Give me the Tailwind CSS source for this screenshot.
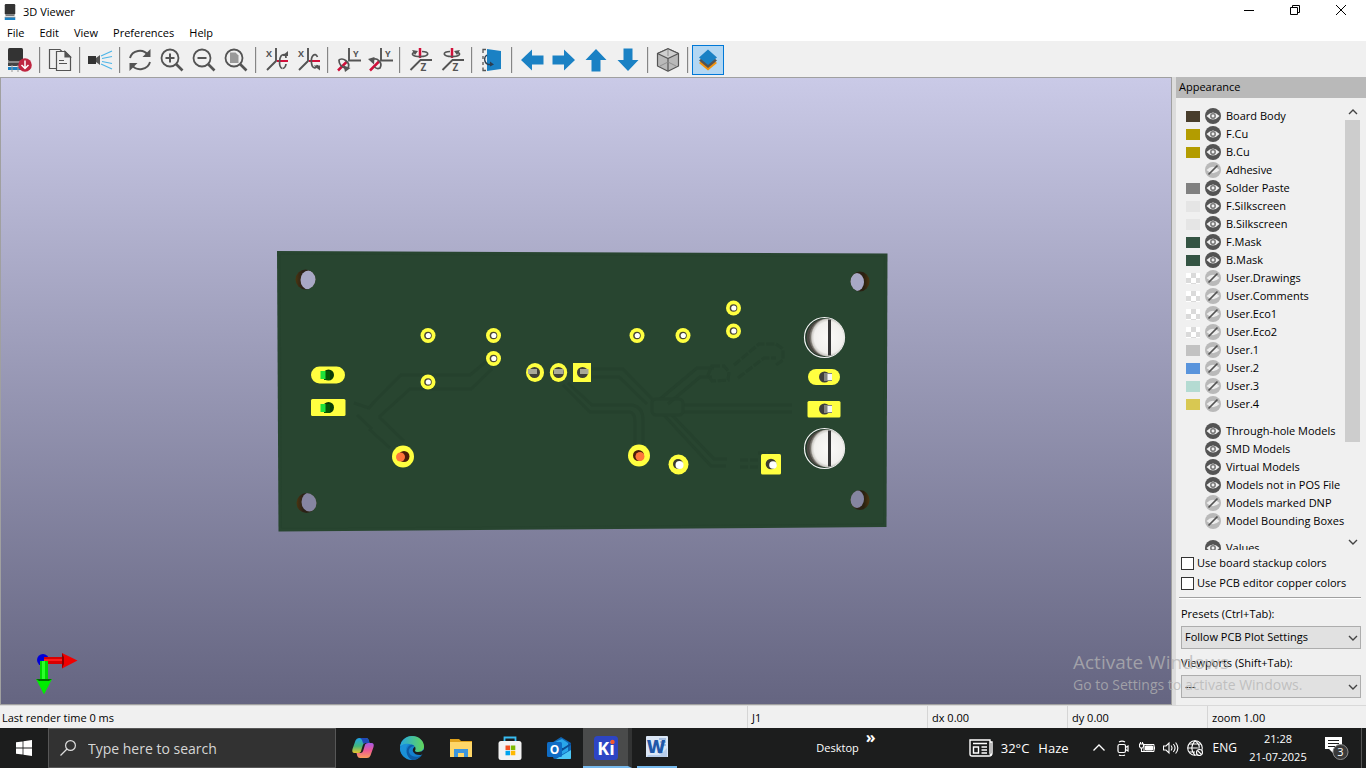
<!DOCTYPE html>
<html lang="en">
<head>
<meta charset="utf-8">
<title>3D Viewer</title>
<script src="https://cdn.jsdelivr.net/npm/@tailwindcss/browser@4"></script>
</head>
<body class="relative flex h-screen flex-col overflow-hidden bg-[#f0f0f0] font-['Open_Sans','Noto_Sans',sans-serif] text-[11px] text-black">

<svg class="hidden">
  <symbol id="eye-on" viewBox="0 0 16 16"><circle cx="8" cy="8" r="8" fill="#545454"/><path d="M1.500 8Q8 .8 14.500 8Q8 15.200 1.500 8Z" fill="#f0f0f0"/><circle cx="8" cy="8" r="2.200" fill="#f0f0f0" stroke="#777" stroke-width="1.500"/></symbol>
  <symbol id="eye-off" viewBox="0 0 16 16"><circle cx="8" cy="8" r="8" fill="#b9b9b9"/><path d="M1.500 8Q8 1.600 14.500 8Q8 14.400 1.500 8Z" fill="#ededed"/><path d="M3.500 12.500L12.500 3.500" stroke="#545454" stroke-width="1.700"/></symbol>
  <symbol id="chev" viewBox="0 0 10 6"><path d="M1 1L5 5L9 1" fill="none" stroke="#444" stroke-width="1.400"/></symbol>
  <symbol id="chip" viewBox="0 0 16 20"><rect x="1" width="14" height="13" rx="1.500" fill="#333"/><path d="M2 13h12v2H2z" fill="#777"/><path d="M1 16h14v1H1z" fill="#555"/><path d="M1 17h14v3H1z" fill="#1a81c4"/></symbol>
  <symbol id="arrow" viewBox="0 0 24 24"><path d="M1 12L12 1.500V7.500H23.500V16.500H12V22.500Z" fill="#1a81c4"/></symbol>
  <symbol id="lens" viewBox="0 0 24 24"><circle cx="10" cy="10" r="8.500" fill="none" stroke="#545454" stroke-width="1.800"/><path d="M16 16L22.500 22.500" stroke="#545454" stroke-width="2.600"/></symbol>
</svg>

<header class="flex h-6 shrink-0 items-center bg-white pl-1 pr-[2px]">
  <svg class="h-4 w-3" viewBox="0 0 16 20" preserveAspectRatio="none"><use href="#chip"/></svg>
  <h1 class="ml-[7px] flex-1">3D Viewer</h1>
  <button aria-label="Minimize" class="flex h-5 w-[46px] items-center justify-center"><svg class="h-3 w-3" viewBox="0 0 12 12"><path d="M1 4.500H11" stroke="#000"/></svg></button>
  <button aria-label="Restore" class="mb-1 flex h-5 w-[46px] items-center justify-center"><svg class="h-3 w-3" viewBox="0 0 12 12"><path d="M1.500 3.500h7v7h-7zM3.500 3V1.500h7v7H9" fill="none" stroke="#000"/></svg></button>
  <button aria-label="Close" class="mb-1 flex h-5 w-[46px] items-center justify-center"><svg class="h-3 w-3" viewBox="0 0 12 12"><path d="M1 1L11 11M11 1L1 11" stroke="#000"/></svg></button>
</header>

<nav class="flex h-[17px] shrink-0 items-center gap-[15px] bg-white pl-[7px] leading-[19px]">
  <button>File</button><button>Edit</button><button>View</button><button>Preferences</button><button>Help</button>
</nav>

<div role="toolbar" aria-label="Main toolbar" class="flex h-9 shrink-0 items-center pl-1 pt-[2px] [&>button]:flex [&>button]:h-[30px] [&>button]:w-8 [&>button]:shrink-0 [&>button]:items-center [&>button]:justify-center [&>button>svg]:size-6 [&>button>svg]:overflow-visible [&>i]:mx-[3px] [&>i]:h-[26px] [&>i]:w-[2px] [&>i]:shrink-0 [&>i]:border-l [&>i]:border-[#858585] [&>i]:bg-[#dedede]">
  <button aria-label="Reload board"><svg viewBox="0 0 24 24"><rect x="0" width="15" height="13" rx="1.500" fill="#333"/><path d="M0 13h14v2H0z" fill="#888"/><path d="M0 15h14v3H0z" fill="#444"/><path d="M0 19h15v3H0z" fill="#1a81c4"/><path d="M4 17v7M10 17v7" stroke="#999"/><circle cx="17" cy="17" r="6.800" fill="#bf2641"/><path d="M17 12.500V20M13.500 17L17 20.500L20.500 17" fill="none" stroke="#fff" stroke-width="1.500"/></svg></button><i></i>
  <button aria-label="Copy"><svg viewBox="0 0 24 24" fill="none" stroke="#545454" stroke-width="1.200"><path d="M8 20.500H1.500V1.500H12l3 3"/><path d="M8.500 3.500h8.500l5.500 5.500v13.500H8.500z" fill="#f0f0f0"/><path d="M17 3.500V9h5.500z" fill="#545454"/><path d="M11 12.500h5M11 15.500h8"/></svg></button><i></i>
  <button aria-label="Raytracing"><svg viewBox="0 0 24 24"><path d="M0 8h8v8H0z" fill="#333"/><path d="M8 10l4-3v10l-4-3z" fill="#545454"/><path d="M13 8L24 3M14 10.500L24 8.500M14 13.500L24 15.500M13 16L24 21" stroke="#4cb5e8" stroke-width="1.200"/></svg></button><i></i>
  <button aria-label="Refresh"><svg viewBox="0 0 24 24" fill="none" stroke="#545454" stroke-width="1.900"><path d="M2 10A10 9.500 0 0 1 20 7M22 14A10 9.500 0 0 1 4 17"/><path d="M22.500 1v8h-8z" fill="#545454" stroke="none"/><path d="M1.500 23v-8h8z" fill="#545454" stroke="none"/></svg></button>
  <button aria-label="Zoom in"><svg viewBox="0 0 24 24"><use href="#lens"/><path d="M5.500 10h9M10 5.500v9" stroke="#545454" stroke-width="2"/></svg></button>
  <button aria-label="Zoom out"><svg viewBox="0 0 24 24"><use href="#lens"/><path d="M5.500 10h9" stroke="#545454" stroke-width="2"/></svg></button>
  <button aria-label="Zoom to fit"><svg viewBox="0 0 24 24"><path d="M6 4.500h5.500l3 3V15H6z" fill="#999"/><use href="#lens"/></svg></button><i></i>
  <button aria-label="Rotate X clockwise"><svg viewBox="0 0 24 24" fill="none" stroke="#545454" stroke-width="1.900"><path d="M12 0V13L3 22"/><path d="M13 13h11" stroke="#d0103a" stroke-width="2"/><path d="M18 20.500C14.500 19 14.500 6.500 20 6.500C21 6.500 22 8 22 10M18.500 20.500q3-.5 3.500-4.500" stroke-width="1.700"/><path d="M18 8h6V3z" fill="#545454" stroke="none"/><text x="2" y="9" font-size="9" font-weight="700" fill="#545454" stroke="none">X</text></svg></button>
  <button aria-label="Rotate X counterclockwise"><svg viewBox="0 0 24 24" fill="none" stroke="#545454" stroke-width="1.900"><path d="M12 0V13L3 22"/><path d="M13 13h11" stroke="#d0103a" stroke-width="2"/><path d="M21.500 9C19 3.500 14.500 8 15.500 15C16 20.500 20 21.500 21.500 17" stroke-width="1.700"/><path d="M17.500 17.500H24v5z" fill="#545454" stroke="none"/><text x="2" y="9" font-size="9" font-weight="700" fill="#545454" stroke="none">X</text></svg></button><i></i>
  <button aria-label="Rotate Y clockwise"><svg viewBox="0 0 24 24" fill="none" stroke="#545454" stroke-width="1.900"><path d="M13 0V12.500H25"/><path d="M11 13.500L2 22.500" stroke="#d0103a" stroke-width="2.500"/><path d="M2.500 12.500C6 8.500 15 14 12 20M3 12.500Q3 18 10 20.500" stroke-width="1.700"/><path d="M7.500 17.500l7 2.500-5.500 4z" fill="#545454" stroke="none"/><text x="17" y="9" font-size="9" font-weight="700" fill="#545454" stroke="none">Y</text></svg></button>
  <button aria-label="Rotate Y counterclockwise"><svg viewBox="0 0 24 24" fill="none" stroke="#545454" stroke-width="1.900"><path d="M13 0V12.500H25"/><path d="M11 13.500L2 22.500" stroke="#d0103a" stroke-width="2.500"/><path d="M3 12.500C9 8 15 15 12 20Q9 21.500 6.500 19" stroke-width="1.700"/><path d="M0 11l6.500-2-.5 7.500z" fill="#545454" stroke="none"/><text x="17" y="9" font-size="9" font-weight="700" fill="#545454" stroke="none">Y</text></svg></button><i></i>
  <button aria-label="Rotate Z clockwise"><svg viewBox="0 0 24 24" fill="none" stroke="#545454" stroke-width="1.900"><path d="M24 12H12.500L2.500 22"/><path d="M12 0V10" stroke="#d0103a" stroke-width="2.500"/><path d="M14 3.500C22 3.500 22 8.500 12 8.500C5 8.500 2.500 6 6 4.500" stroke-width="1.600"/><path d="M4 2l6 1-3 4z" fill="#545454" stroke="none"/><text x="12.500" y="22.500" font-size="10" font-weight="700" fill="#545454" stroke="none">Z</text></svg></button>
  <button aria-label="Rotate Z counterclockwise"><svg viewBox="0 0 24 24" fill="none" stroke="#545454" stroke-width="1.900"><path d="M24 12H12.500L2.500 22"/><path d="M12 0V10" stroke="#d0103a" stroke-width="2.500"/><path d="M10 3.500C2 3.500 2 8.500 12 8.500C19 8.500 21.500 6 18 4.500" stroke-width="1.600"/><path d="M20 2l-6 1 3 4z" fill="#545454" stroke="none"/><text x="12.500" y="22.500" font-size="10" font-weight="700" fill="#545454" stroke="none">Z</text></svg></button><i></i>
  <button aria-label="Flip board"><svg viewBox="0 0 24 24" fill="none"><path d="M7 1l14 2v18L7 23z" fill="#1a81c4"/><path d="M6 1.500H3V5M3 8v3M3 14v3M3 19.500V22.500h3" stroke="#545454" stroke-width="1.300"/><path d="M7 7C3.500 9 4 15 8 16.500h4" stroke="#2c3e50" stroke-width="1.300"/><path d="M10 13.500l4 3-4 2z" fill="#2c3e50"/></svg></button><i></i>
  <button aria-label="Move left"><svg viewBox="0 0 24 24"><use href="#arrow"/></svg></button>
  <button aria-label="Move right"><svg class="rotate-180" viewBox="0 0 24 24"><use href="#arrow"/></svg></button>
  <button aria-label="Move up"><svg class="rotate-90" viewBox="0 0 24 24"><use href="#arrow"/></svg></button>
  <button aria-label="Move down"><svg class="-rotate-90" viewBox="0 0 24 24"><use href="#arrow"/></svg></button><i></i>
  <button aria-label="Orthographic projection"><svg viewBox="0 0 24 24" stroke="#545454" stroke-width="1.200" stroke-linejoin="round"><path d="M12 .8L22.500 5.500V18L12 23.200L1.500 18V5.500z" fill="#b9b9b9"/><path d="M12 .8L22.500 5.500L12 10.500L1.500 5.500z" fill="#cfcfcf"/><path d="M12 10.500V23" fill="none"/><path d="M12 2v6M12 14L4 18M12 14l8 4" stroke="#8a8a8a" stroke-width=".9"/></svg></button><i></i>
  <button aria-label="Appearance manager" aria-pressed="true" class="border border-[#0078d7] bg-[#b3d7f3]"><svg viewBox="0 0 24 24"><path d="M12 7.500L21 15L12 22.500L3 15z" fill="#f2920c"/><path d="M12 5L21 12.500L12 20L3 12.500z" fill="#545454"/><path d="M12 1.500L21 9.500L12 17L3 9.500z" fill="#1a81c4"/></svg></button>
</div>

<main class="flex min-h-0 flex-1">
  <section aria-label="3D board view" class="relative min-w-0 flex-1 border border-[#a0a0a0] bg-linear-to-b from-[#cacae7] to-[#656581]">
    <svg class="absolute inset-0 h-full w-full" viewBox="1 78 1170 626">
      <defs>
        <radialGradient id="head" cx=".55" cy=".5" r=".52"><stop offset="0" stop-color="#fbfaf8"/><stop offset=".8" stop-color="#f1f0ed"/><stop offset=".93" stop-color="#cfcdc8"/><stop offset="1" stop-color="#77746d"/></radialGradient>
        <linearGradient id="wood"><stop stop-color="#4a3510"/><stop offset=".35" stop-color="#2a2118"/><stop offset=".7" stop-color="#2a2110"/><stop offset="1" stop-color="#4a3510"/></linearGradient>
        <clipPath id="h1"><ellipse cx="305.500" cy="279.500" rx="10" ry="10"/></clipPath>
        <clipPath id="h2"><ellipse cx="306.500" cy="503" rx="10" ry="10"/></clipPath>
        <clipPath id="h3"><ellipse cx="860" cy="281.500" rx="9.500" ry="10"/></clipPath>
        <clipPath id="h4"><ellipse cx="860" cy="500" rx="9.500" ry="10"/></clipPath>
        <g id="pad"><circle r="7.500" fill="#ffff40"/><circle r="3.800" fill="#4a4636"/><circle cx=".3" r="2.600" fill="#fff"/></g>
        <g id="screw"><circle r="20" fill="#1e3827" stroke="#f4f4f4" stroke-width="1.200"/><ellipse cx="-1" rx="17" ry="18.500" fill="#4b4842"/><ellipse cx="2.500" rx="17.500" ry="19" fill="url(#head)"/><path d="M3.500-18h3v36h-3z" fill="#353535"/></g>
      </defs>
      <path d="M277 251L887.500 253.500L886.500 527L278.500 531.500Z" fill="#284530"/>
      <path d="M280 254L884.500 256.500L883.500 524L281.500 528.500Z" fill="none" stroke="#26432e"/>
      <g fill="none" stroke="#25412d" stroke-width="3">
        <path d="M374 402L401 375H470L488 360M379 417L410 389H471L492 369M374 402L369 408L354 403M379 417L404 441M369 429L390 448M357 415L372 429"/>
        <path d="M592 369H623L653 400M592 377H619L647 404M568 383L592 405H632Q643 407 643 420V445M563 385L590 412H630Q635 413 635 422V444"/>
        <path d="M660 399L697 368H714M668 404L700 377H712M682 405H792M682 412H792M664 415L711 466H726M672 415L714 459H727"/>
        <path d="M712 366h12l5 6-1 8-16 1-4-6zM734 365l25-21h17M738 378l26-20h12M776 344l7 5v11l-7 5M740 460h20M740 467h20M758 453h20" stroke-dasharray="8 2"/>
        <rect x="652" y="399" width="31" height="16" rx="4"/>
      </g>
      <g fill="url(#wood)">
        <ellipse cx="305.500" cy="279.500" rx="10" ry="10"/><ellipse cx="306.500" cy="503" rx="10" ry="10"/><ellipse cx="860" cy="281.500" rx="9.500" ry="10"/><ellipse cx="860" cy="500" rx="9.500" ry="10"/>
      </g>
      <g clip-path="url(#h1)"><ellipse cx="308.500" cy="280" rx="8" ry="9.500" fill="#a8a8c5"/></g>
      <g clip-path="url(#h2)"><ellipse cx="309.500" cy="502" rx="8" ry="9.500" fill="#8585a1"/></g>
      <g clip-path="url(#h3)"><ellipse cx="857" cy="282" rx="7" ry="9" fill="#a8a8c5"/></g>
      <g clip-path="url(#h4)"><ellipse cx="857" cy="499" rx="7" ry="9" fill="#8585a1"/></g>
      <use href="#pad" x="428" y="335.500"/><use href="#pad" x="493.500" y="335.500"/><use href="#pad" x="493.500" y="358.500"/><use href="#pad" x="428" y="382"/><use href="#pad" x="637" y="335.500"/><use href="#pad" x="683" y="335.500"/><use href="#pad" x="733.500" y="308"/><use href="#pad" x="733.500" y="331"/>
      <g fill="#ffff40">
        <rect x="311" y="366.500" width="34" height="17" rx="8.500"/><rect x="311" y="399" width="34.500" height="17" rx="1.500"/>
        <rect x="808" y="369" width="32" height="16" rx="8"/><rect x="807.500" y="401" width="33" height="16.500" rx="1.500"/>
        <ellipse cx="535" cy="372.500" rx="9" ry="9.500"/><ellipse cx="558.500" cy="372.500" rx="8.700" ry="9.500"/><rect x="573" y="363" width="18" height="19"/>
        <circle cx="403" cy="456.500" r="11"/><circle cx="639" cy="455.500" r="11"/><circle cx="678.500" cy="464.500" r="10"/><rect x="761" y="454" width="20" height="20.500" rx="1.500"/>
      </g>
      <g fill="#073b07"><circle cx="328.500" cy="375" r="5.500"/><circle cx="328.500" cy="407.500" r="5.500"/><path d="M324 371h6v9h-6zM324 404h6v9h-6z" fill="#065806"/><path d="M320.500 371h5v8h-5zM320.500 404h5v8h-5z" fill="#1ee33a"/></g>
      <g fill="#3e3e3c"><circle cx="824.500" cy="377" r="5.500"/><circle cx="824.500" cy="409" r="5.500"/><path d="M824 373h8v8h-8zM824 405h8v8h-8z" fill="#858580"/><path d="M827.500 374h4.500v6h-4.500zM827.500 406h4.500v6h-4.500z" fill="#f6f6f6"/></g>
      <g fill="#403f38"><circle cx="534.500" cy="372.500" r="5.500"/><circle cx="558.500" cy="372.500" r="5.500"/><circle cx="582.500" cy="372.500" r="5.500"/><path d="M528 369h9v5h-9zM554 369h9.500v5H554zM580 369h8.500v5H580z" fill="#a9a898"/></g>
      <circle cx="404" cy="456.500" r="5.500" fill="#4b1d0a"/><circle cx="400.500" cy="457" r="4.500" fill="#ff763b"/>
      <circle cx="638.500" cy="455.500" r="5.500" fill="#4b1d0a"/><circle cx="640" cy="456.500" r="4.500" fill="#ff763b"/>
      <circle cx="678" cy="464" r="5" fill="#3c3a30"/><circle cx="679.500" cy="465" r="4" fill="#fff"/>
      <circle cx="771" cy="464" r="5.300" fill="#3c3a30"/><circle cx="773" cy="465" r="3.800" fill="#fff"/>
      <use href="#screw" x="824.500" y="337.500"/><use href="#screw" x="824.500" y="448.500"/>
    </svg>
    <svg class="absolute bottom-2 left-[34px] h-11 w-11" viewBox="35 652 44 44">
      <circle cx="43" cy="660" r="6" fill="#0000d8"/>
      <path d="M44 657h19v7H44z" fill="#d90000"/><path d="M44 659h19v2H44z" fill="#ff1c1c"/><path d="M62 653L77.500 660.500L62 668.500z" fill="#f00000"/><path d="M62 653l2 4v7l-2 4.500z" fill="#8a0000"/>
      <path d="M40 661h8v19h-8z" fill="#00d800"/><path d="M42 661h3v19h-3z" fill="#2bff2b"/><path d="M36 679h16L44 694.500z" fill="#00ee00"/><path d="M36 679h16l-3 2H39z" fill="#006b00"/>
    </svg>
  </section>

  <aside aria-label="Appearance" class="flex w-[194px] shrink-0 flex-col border-l-4 border-[#dcdcdc]">
    <h2 class="h-[21px] shrink-0 bg-[#b9b9b9] pl-[3px] leading-[20px]">Appearance</h2>
    <div class="mt-[5px] mr-[6px] flex min-h-0 flex-1 overflow-hidden">
      <ul id="layers" class="min-w-0 flex-1 overflow-hidden pl-[10px] pt-1"></ul>
      <div class="flex w-[15px] shrink-0 flex-col items-center">
        <button aria-label="Scroll up" class="flex h-[17px] items-center"><svg class="h-[6px] w-[10px] rotate-180"><use href="#chev"/></svg></button>
        <div class="flex w-full flex-1 flex-col"><div class="h-[78%] bg-[#cdcdcd]"></div></div>
        <button aria-label="Scroll down" class="flex h-[17px] items-center"><svg class="h-[6px] w-[10px]"><use href="#chev"/></svg></button>
      </div>
    </div>
    <div class="flex shrink-0 flex-col pt-[3px] pl-[5px] pr-[5px]">
      <label class="flex h-5 items-center gap-[3px] whitespace-nowrap"><input type="checkbox" class="size-[13px] shrink-0 appearance-none border border-[#333] bg-white">Use board stackup colors</label>
      <label class="flex h-5 items-center gap-[3px] whitespace-nowrap"><input type="checkbox" class="size-[13px] shrink-0 appearance-none border border-[#333] bg-white">Use PCB editor copper colors</label>
      <hr class="mt-1 mb-[7px] -ml-[2px] h-[2px] border-0 border-t border-[#a0a0a0] bg-white">
      <label for="presets" class="h-5 leading-4">Presets (Ctrl+Tab):</label>
      <div class="relative"><select id="presets" class="block h-[23px] w-full appearance-none border border-[#adadad] bg-[#e1e1e1] pl-[3px]"><option>Follow PCB Plot Settings</option></select><svg class="pointer-events-none absolute top-[9px] right-[3px] h-[6px] w-[10px]"><use href="#chev"/></svg></div>
      <label for="viewports" class="mt-[5px] h-5 leading-[18px]">Viewports (Shift+Tab):</label>
      <div class="relative mb-[7px] mt-[1px]"><select id="viewports" class="block h-[23px] w-full appearance-none border border-[#adadad] bg-[#e1e1e1] pl-[3px]"><option>---</option></select><svg class="pointer-events-none absolute top-[9px] right-[3px] h-[6px] w-[10px]"><use href="#chev"/></svg></div>
    </div>
  </aside>
</main>

<footer class="flex h-[23px] shrink-0 items-stretch border-t border-[#d9d9d9] leading-6 [&>span]:border-l [&>span]:border-[#d5d5d5] [&>span]:pl-1">
  <p class="flex-1 pl-[2px]">Last render time 0 ms</p>
  <span class="w-[180px]">J1</span><span class="w-[140px]">dx 0.00</span><span class="w-[140px]">dy 0.00</span><span class="w-[159px]">zoom 1.00</span>
</footer>

<div class="flex h-10 shrink-0 items-center bg-[#1c1d1d] text-white">
  <button aria-label="Start" class="flex h-full w-12 items-center justify-center"><svg class="size-4" viewBox="0 0 16 16" fill="#fff"><path d="M0 2.300L6.600 1.400V7.600H0zM7.400 1.300L16 0V7.600H7.400zM0 8.400H6.600V14.600L0 13.700zM7.400 8.400H16V16L7.400 14.700z"/></svg></button>
  <label class="mr-[2px] flex h-full w-72 items-center gap-[12px] border border-[#575757] bg-[#323232] pl-[11px]">
    <svg class="size-4 shrink-0" viewBox="0 0 16 16" fill="none" stroke="#ddd" stroke-width="1.200"><circle cx="10.500" cy="5.500" r="4.900"/><path d="M7 9L.5 15.500"/></svg>
    <input type="text" aria-label="Search" placeholder="Type here to search" class="w-56 bg-transparent text-[14px] placeholder:text-[#d6d6d6]">
  </label>
  <nav aria-label="Pinned apps" class="flex h-full [&>button]:flex [&>button]:w-[49px] [&>button]:items-center [&>button]:justify-center">
    <button aria-label="Copilot"><svg class="size-6" viewBox="0 0 24 24"><defs><linearGradient id="c1" x1="0" y1="0" x2="0" y2="1"><stop stop-color="#1fa4ea"/><stop offset=".55" stop-color="#44b77a"/><stop offset="1" stop-color="#e9c52c"/></linearGradient><linearGradient id="c2" x1="0" y1="0" x2="0" y2="1"><stop stop-color="#a55ae8"/><stop offset=".5" stop-color="#ee5a94"/><stop offset="1" stop-color="#fb9d5b"/></linearGradient></defs><path d="M8 2h7q2 0 2.700 2l.8 3h-4q-2 0-2.600 2l-2 6.500Q9.200 17 7 17H3.500Q.5 17 1.500 13L4.500 4.500Q5.500 2 8 2z" fill="url(#c1)"/><path d="M16 22H9q-2 0-2.700-2l-.8-3h4q2 0 2.600-2l2-6.500Q14.800 7 17 7h3.500q3 0 2 4l-3 8.500Q18.500 22 16 22z" fill="url(#c2)"/><path d="M8 2h7q2 0 2.700 2l.8 3h-4q-1.500 0-2.200 1L11 4Q10 2 8 2z" fill="#2149b8"/></svg></button>
    <button aria-label="Edge"><svg class="size-6" viewBox="0 0 24 24"><defs><linearGradient id="e1"><stop stop-color="#27a8e0"/><stop offset="1" stop-color="#62d55a"/></linearGradient></defs><circle cx="12" cy="12" r="12" fill="#1480cf"/><path d="M0 11C1 4 6 0 12 0C19 0 24 5 24 10.500C24 14 21 16 18 16C15 16 14 15 15 13.500C16 11 13 8 9 8C5 8 1 9 0 11z" fill="url(#e1)"/><path d="M9 8C4 11 5 20 13 23.900C6 24 0 19 0 12C2 8 6 7 9 8z" fill="#1b91d8"/><path d="M14.500 10C11 10 8 13 9 16.500C11 21.500 18 22 21.500 19C19 23 15 24 12 24C6 21 5 13 9.500 9.500Q12 8 14.500 10z" fill="#0d5ba5"/><path d="M15 10.500q-3 2-2 5 2 4 8 3.500l2.500-1.500q2-3 .5-4-2 2.500-6 2.500-3 0-3-1.500 1-1.500 0-4z" fill="#1c1d1d"/></svg></button>
    <button aria-label="File Explorer"><svg class="size-6" viewBox="0 0 24 24"><path d="M1 3h9l2 2h11v15H1z" fill="#e0a21b"/><path d="M1 6h22v15H1z" fill="#ffd768"/><path d="M5 13h14v8h-4v-4H9v4H5z" fill="#3d96dd"/></svg></button>
    <button aria-label="Store"><svg class="size-6" viewBox="0 0 24 24"><path d="M6.500 7V1.500h11V7" fill="none" stroke="#38bdf2" stroke-width="1.800"/><rect x=".5" y="5" width="23" height="19" rx="2.500" fill="#f3f3f3"/><path d="M7.500 9.500H12V14H7.500z" fill="#f25022"/><path d="M12.800 9.500h4.500V14h-4.500z" fill="#7fba00"/><path d="M7.500 14.800H12v4.500H7.500z" fill="#00a4ef"/><path d="M12.800 14.800h4.500v4.500h-4.500z" fill="#ffb900"/></svg></button>
    <button aria-label="Outlook"><svg class="size-6" viewBox="0 0 24 24"><path d="M3 8L14 1L24 7v15q0 1-1 1H8q-2 0-2-2z" fill="#1066b5"/><path d="M8 6l7-3 6 4v8l-7 4-6-3z" fill="#29a6ea"/><path d="M24 8v14q0 1-1 1H9l15-9z" fill="#4cc7f5"/><path d="M8 11l7 4 9-6v-2l-8 5z" fill="#0b4c94"/><rect y="6" width="15" height="15" rx="1.500" fill="#0f6cc4"/><text x="7.500" y="18" font-size="12" font-weight="700" text-anchor="middle" fill="#fff">O</text></svg></button>
    <button aria-label="KiCad" class="border-r-4 border-b-2 border-r-[#323333] border-b-[#76b9ed] bg-[#4a4b4b] pt-[2px]"><svg class="size-6" viewBox="0 0 24 24"><rect width="24" height="24" rx="3.500" fill="#2d45c4"/><text x="12" y="19" font-size="18" font-weight="700" text-anchor="middle" fill="#fff">Ki</text><circle cx="18.500" cy="6" r="2.200" fill="#f4582a"/></svg></button>
    <button aria-label="Word" class="pt-0"><span class="mx-1 flex h-full w-10 items-center justify-center border-b-2 border-[#76b9ed]"><svg class="size-6" viewBox="0 0 24 24"><path d="M2 1h20q1 0 1 1v20H1V2q0-1 1-1z" fill="#dbe7f6"/><path d="M14 4h7M15 7h6M16 10h5M14 18h7" stroke="#6d94cc"/><path d="M3 20h12l7-7v9H2z" fill="#b7cdea"/><text x="11" y="18" font-size="18" font-weight="800" text-anchor="middle" fill="#1f58a8">W</text></svg></span></button>
  </nav>
  <div class="ml-auto flex h-full shrink-0 items-center text-[11px] leading-[18px]">
    <span>Desktop</span><button aria-label="More toolbars" class="ml-[7px] mb-[22px] w-[10px] text-[16px] font-bold leading-[14px]">»</button>
    <button class="ml-[93px] flex items-center text-[13px]"><svg class="mr-2 h-[18px] w-6" viewBox="0 0 24 18" fill="none" stroke="#fff" stroke-width="1.400"><path d="M21 3h2v11q0 3-3 3H3q-2 0-2-2V1h20v13q0 2 1 2"/><path d="M4 4.500h14M12.500 8H18M12.500 11H18M12.500 14H18M4.500 8h5v6h-5z"/></svg>32°C<span class="ml-[9px]">Haze</span></button>
    <div class="ml-[22px] flex items-center gap-2 [&_svg]:size-4 [&_svg]:shrink-0 [&_svg]:fill-none [&_svg]:stroke-white">
      <svg viewBox="0 0 16 16"><path d="M2.500 10.500L8 5l5.500 5.500" stroke-width="1.300"/></svg>
      <svg viewBox="0 0 16 16" stroke-width="1.200"><rect x="3" y="4.500" width="7.500" height="8" rx="1.500"/><path d="M10.500 7.500L13 6v5l-2.500-1.500M4 2Q7 .3 10 2M4 15q3 1.500 6 0"/></svg>
      <svg viewBox="0 0 16 16"><path d="M5 4.500h10v7H5z"/><path d="M6.500 6h7v4h-7z" fill="#fff"/><path d="M15.500 6.500v3M.5 4h4v2.500l-1 1.500h-2L.5 6.500zM1.500 2v2M3.500 2v2M2.500 8v3.500H5" stroke-width="1.100"/></svg>
      <svg viewBox="0 0 16 16" stroke-width="1.100"><path d="M.5 6v4h2.500l3 3V3L3 6zM8 5.500q2 2.500 0 5M10.300 4q3.500 4 0 8M12.600 2.500q4.500 5.500 0 11"/></svg>
      <svg viewBox="0 0 16 16" stroke-width="1.100"><circle cx="8" cy="8" r="7.300"/><path d="M8 .7Q1.500 8 8 15.300M8 .7q5.500 4 3.800 8M.8 8h10M2 4h12M2 12h6"/><circle cx="12.500" cy="12.500" r="3" fill="#1c1d1d"/><path d="M10.500 10.500l4 4"/></svg>
      <span class="ml-[2px] text-[12px]">ENG</span>
    </div>
    <time class="ml-3 w-[58px] text-center">21:28<br><span class="whitespace-nowrap">21-07-2025</span></time>
    <button aria-label="Notifications" class="ml-[18px] mr-3"><svg class="h-6 w-6" viewBox="0 0 24 24"><path d="M0 1h17v12H8v4l-4-4H0z" fill="#fff"/><path d="M3 4.500h11M3 7.500h11M3 10.500h7" stroke="#1c1d1d"/><circle cx="15.500" cy="16" r="7.500" fill="#3a3a3a" stroke="#8d8d8d"/><text x="15.500" y="20" font-size="11" text-anchor="middle" fill="#fff">3</text></svg></button>
    <i class="mr-[4px] h-full w-px bg-[#555]"></i>
  </div>
</div>

<div class="pointer-events-none absolute right-[57px] bottom-[72px] w-[236px] whitespace-nowrap text-[#b4b4b4]/75">
  <p class="text-[19px] leading-6">Activate Windows</p>
  <p class="text-[14px] leading-[22px]">Go to Settings to activate Windows.</p>
</div>

<script>
const checker = 'bg-[repeating-conic-gradient(#dadada_0_25%,#fff_0_50%)] bg-[length:10px_10px]';
const rows = [
  ['Board Body', 'bg-[#483d2c]', 1], ['F.Cu', 'bg-[#b39c00]', 1], ['B.Cu', 'bg-[#b39c00]', 1], ['Adhesive', '', 0],
  ['Solder Paste', 'bg-[#808080]', 1], ['F.Silkscreen', 'bg-[#e5e5e5]', 1], ['B.Silkscreen', 'bg-[#e5e5e5]', 1],
  ['F.Mask', 'bg-[#345443]', 1], ['B.Mask', 'bg-[#345443]', 1],
  ['User.Drawings', checker, 0], ['User.Comments', checker, 0], ['User.Eco1', checker, 0], ['User.Eco2', checker, 0],
  ['User.1', 'bg-[#c2c2c2]', 0], ['User.2', 'bg-[#5994dc]', 0], ['User.3', 'bg-[#b4dbd2]', 0], ['User.4', 'bg-[#d8c852]', 0], null,
  ['Through-hole Models', '', 1], ['SMD Models', '', 1], ['Virtual Models', '', 1], ['Models not in POS File', '', 1],
  ['Models marked DNP', '', 0], ['Model Bounding Boxes', '', 0], null, ['Values', '', 1]
];
document.getElementById('layers').innerHTML = rows.map(r => r
  ? `<li class="flex h-[18px] items-center whitespace-nowrap"><span class="mr-[5px] h-[11px] w-[14px] shrink-0 ${r[1]}"></span><button aria-label="Toggle ${r[0]}" class="mr-[5px] size-4 shrink-0"><svg class="size-4"><use href="#eye-${r[2] ? 'on' : 'off'}"/></svg></button>${r[0]}</li>`
  : '<li class="h-[9px]"></li>').join('');
</script>
</body>
</html>
